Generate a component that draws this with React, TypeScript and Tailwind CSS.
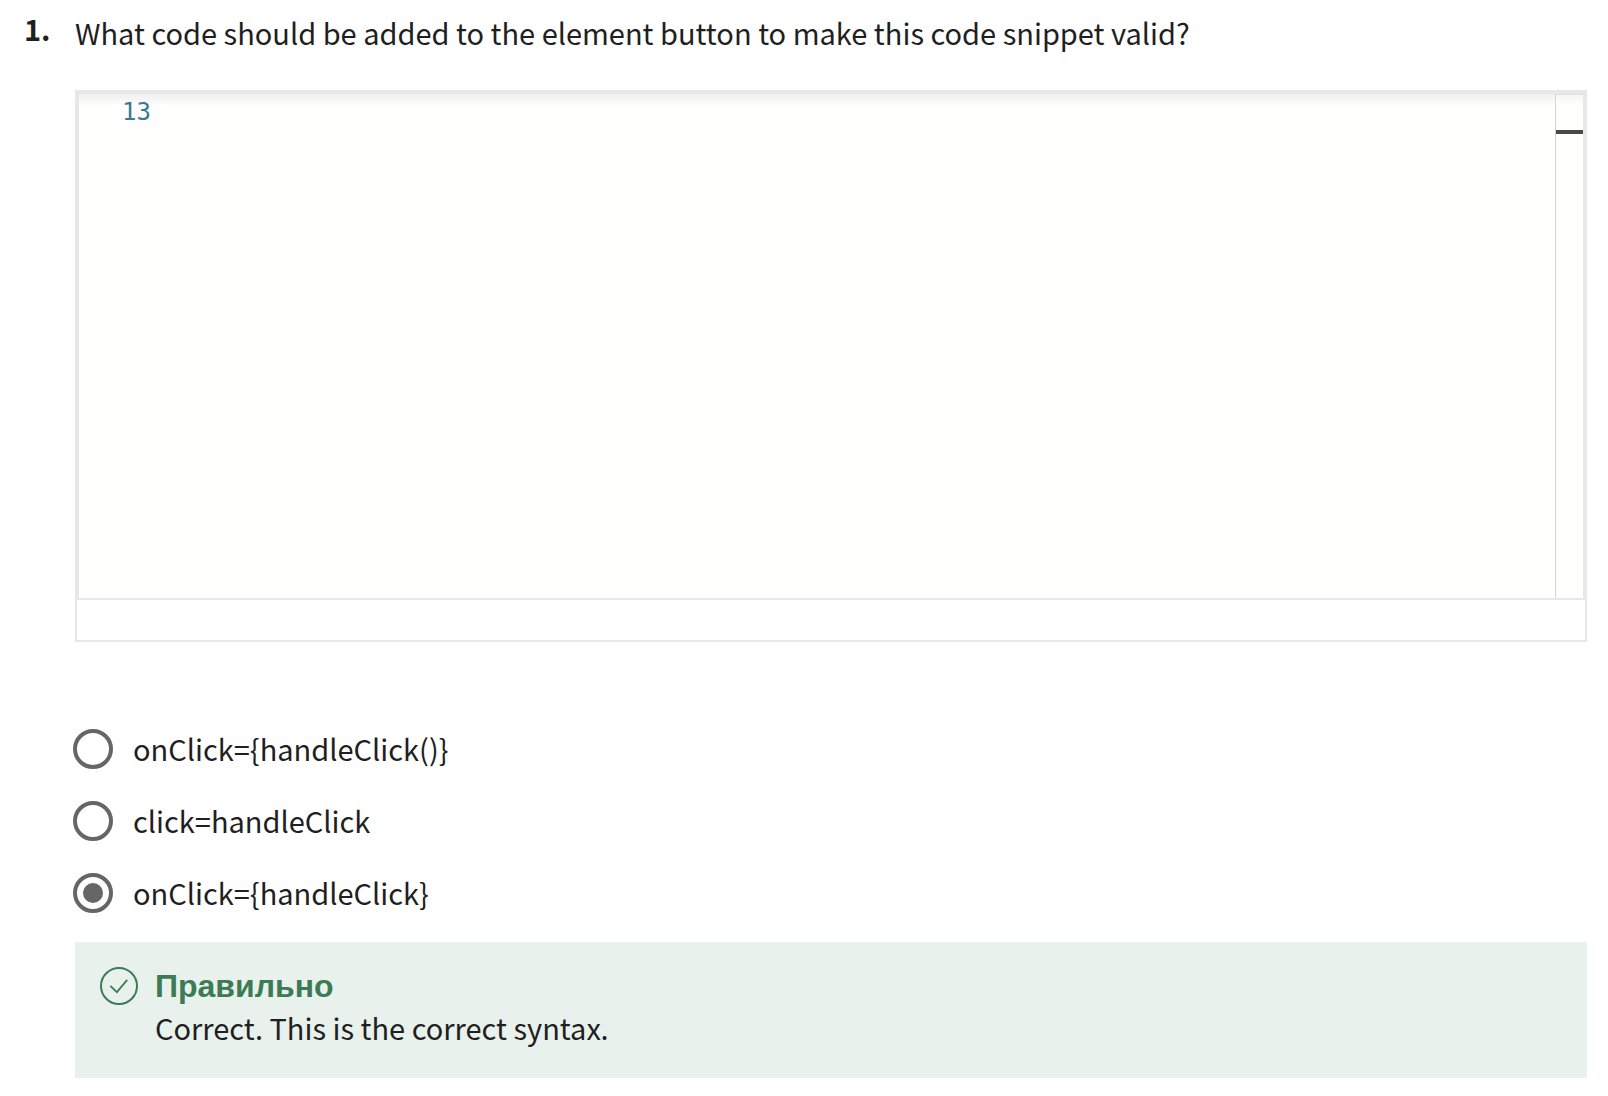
import { useState } from "react";

const options = ["onClick={handleClick()}", "click=handleClick", "onClick={handleClick}"];

function CodeEditor() {
  return (
    <div className="border-2 border-[#e5e7e8] bg-white">
      <div className="flex h-[508px] border-2 border-[#e5e7e8] bg-[#fffffe]">
        <div className="flex-1 bg-linear-to-b from-[#eeefee] to-[#fffffe] to-[12px] pl-[43px]">
          <div className="font-['DejaVu_Sans_Mono',monospace] text-2xl leading-9 text-[#3b7893]">13</div>
        </div>
        <div className="w-7 border-l border-[#d4d4d4] bg-linear-to-b from-[#f5f5f5] to-[#fffffe] to-[12px]">
          <div className="border-t border-[#e0e1e2] pt-[35px]">
            <div className="h-1 bg-[#4a494a]" />
          </div>
        </div>
      </div>
      <div className="h-10" />
    </div>
  );
}

function CheckIcon() {
  return (
    <svg className="size-[38px] shrink-0" viewBox="0 0 38 38" fill="none" stroke="#3c7b54" aria-hidden="true">
      <circle cx="19" cy="19" r="18" strokeWidth="2" />
      <path d="M10.3 18.8L16.9 25.2L27.2 12.8" strokeWidth="1.8" />
    </svg>
  );
}

function Feedback() {
  return (
    <section className="flex gap-[17px] bg-[#e8f1ec] pt-[25px] pr-6 pb-6 pl-[25px]">
      <CheckIcon />
      <div>
        <h3 className="font-['Liberation_Sans',Arial,sans-serif] text-[32px] leading-[38px] font-bold text-[#3c7b54]">
          Правильно
        </h3>
        <p className="pb-[5px] leading-11">Correct. This is the correct syntax.</p>
      </div>
    </section>
  );
}

export default function App() {
  const [selected, setSelected] = useState(2);
  return (
    <main className="flex min-h-screen bg-white pt-3 pr-[21px] pb-4 pl-6 font-['Noto_Sans_CJK_SC',sans-serif] text-[29px] text-[#1f1f1f]">
      <div className="w-[51px] shrink-0 leading-8 font-bold">1.</div>
      <div className="flex-1">
        <h2 className="mb-[38px] leading-10">What code should be added to the element button to make this code snippet valid?</h2>
        <CodeEditor />
        <fieldset className="mt-[71px] mb-[13px]">
          {options.map((label, i) => (
            <label key={label} className="-ml-0.5 flex h-[72px] items-center gap-5">
              <input
                type="radio"
                name="answer"
                checked={selected === i}
                onChange={() => setSelected(i)}
                className="grid size-10 shrink-0 appearance-none place-items-center rounded-full border-4 border-[#666] bg-white checked:before:size-5 checked:before:rounded-full checked:before:bg-[#666]"
              />
              <span className="pb-0.5 leading-10">{label}</span>
            </label>
          ))}
        </fieldset>
        <Feedback />
      </div>
    </main>
  );
}
